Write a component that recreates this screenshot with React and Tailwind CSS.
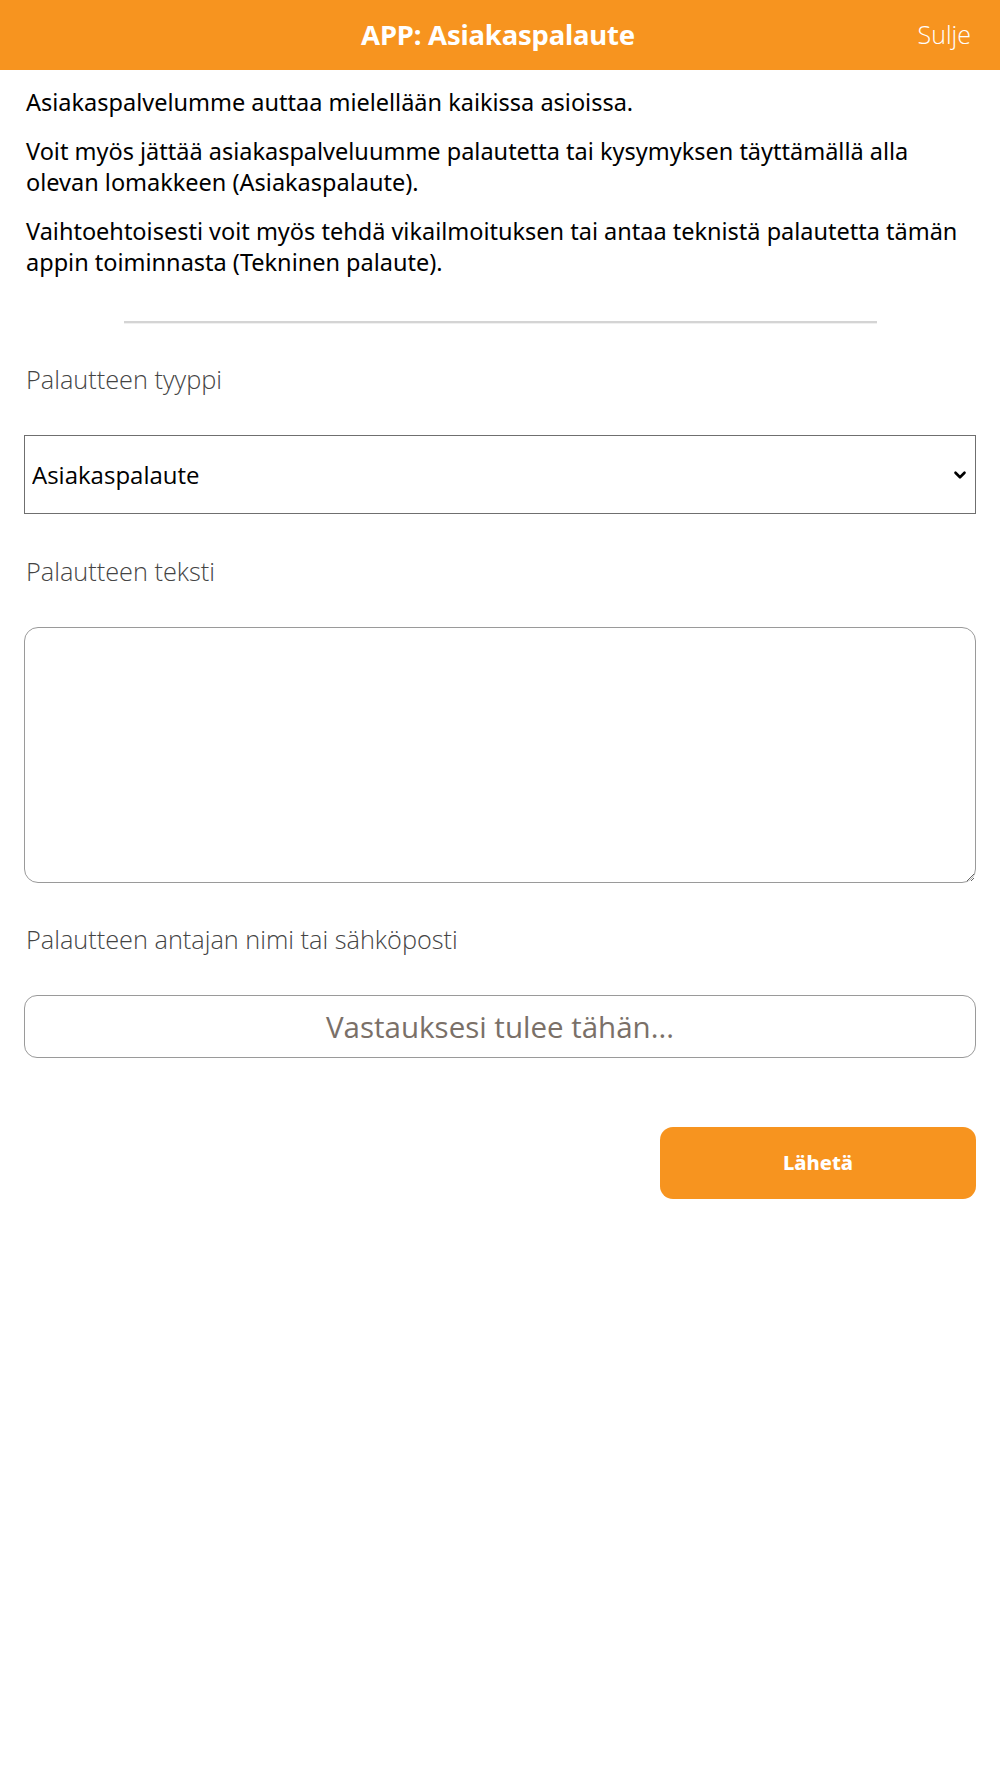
import { ChevronDown } from 'lucide-react'

const bodyFont = { fontFamily: '"Noto Sans", "Open Sans", sans-serif' }

function Label({ children }) {
  return (
    <p className="text-[25.3px] leading-[31px] font-light text-[#444] px-[2px]" style={{ fontFamily: '"Open Sans", "Noto Sans", sans-serif' }}>
      {children}
    </p>
  )
}

export default function App() {
  return (
    <div className="min-h-screen bg-white" style={bodyFont}>
      <header className="h-[70px] bg-[#f7941f] grid grid-cols-[1fr_auto_1fr] items-center pl-[25px] pr-[29px]">
        <div />
        <h1 className="text-white font-bold text-[27.5px] tracking-[-0.2px]">APP: Asiakaspalaute</h1>
        <div className="flex justify-end">
          <button className="text-white font-light text-[25px] -mt-[1px]" style={{ fontFamily: '"Open Sans", sans-serif' }}>Sulje</button>
        </div>
      </header>

      <main className="px-[24px] pt-[17px]">
        <div className="px-[2px] text-[23.5px] leading-[31px] text-black space-y-[18px]">
          <p>Asiakaspalvelumme auttaa mielellään kaikissa asioissa.</p>
          <p>Voit myös jättää asiakaspalveluumme palautetta tai kysymyksen täyttämällä alla olevan lomakkeen (Asiakaspalaute).</p>
          <p>Vaihtoehtoisesti voit myös tehdä vikailmoituksen tai antaa teknistä palautetta tämän appin toiminnasta (Tekninen palaute).</p>
        </div>

        <div className="mt-[43px] mx-auto w-[753px] h-[3px] border-t-2 border-[#d4d4d4] bg-[#f0f0f0]" />

        <div className="mt-[40px]">
          <Label>Palautteen tyyppi</Label>
        </div>
        <div className="relative mt-[40px]">
          <select
            className="appearance-none w-full h-[79px] border border-[#6f6f6f] bg-white px-[7px] text-[24px] text-black outline-none"
            style={{ fontFamily: '"Open Sans", sans-serif' }}
            defaultValue="Asiakaspalaute"
          >
            <option>Asiakaspalaute</option>
            <option>Tekninen palaute</option>
          </select>
          <ChevronDown size={18} strokeWidth={3.5} className="absolute right-[7px] top-[31px] text-black pointer-events-none" />
        </div>

        <div className="mt-[42px]">
          <Label>Palautteen teksti</Label>
        </div>
        <textarea className="block mt-[40px] w-full h-[256px] border border-[#9a9a9a] rounded-[14px] p-3 outline-none" />

        <div className="mt-[41px]">
          <Label>Palautteen antajan nimi tai sähköposti</Label>
        </div>
        <input
          className="block mt-[40px] w-full h-[63px] border border-[#9a9a9a] rounded-[13px] text-center text-[29.5px] placeholder:text-[#7a7068] outline-none"
          style={{ fontFamily: '"Open Sans", sans-serif' }}
          placeholder="Vastauksesi tulee tähän..."
        />

        <div className="flex justify-end mt-[69px]">
          <button className="w-[316px] h-[72px] rounded-[13px] bg-[#f7941f] text-white font-extrabold text-[20px]">
            Lähetä
          </button>
        </div>
      </main>
    </div>
  )
}
